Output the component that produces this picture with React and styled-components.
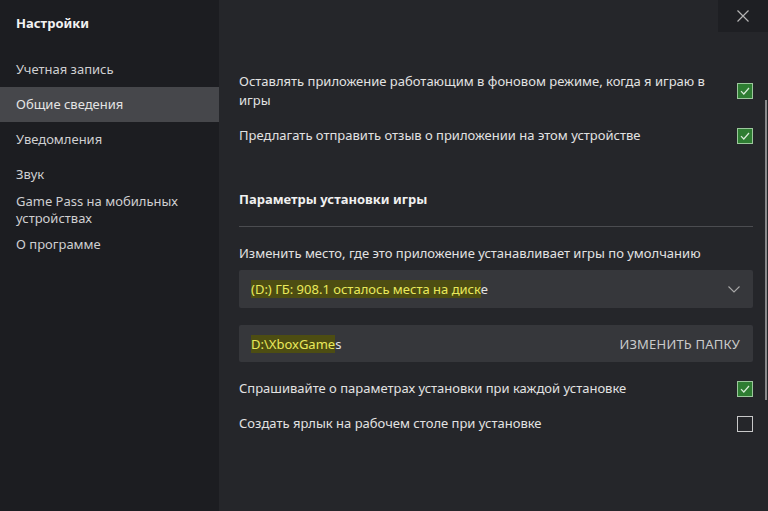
import React from "react"
import styled, { createGlobalStyle } from "styled-components"

const GlobalStyle = createGlobalStyle`
    html, body {
        margin:0;
        padding:0;
        background:#25262a;
    }
    * { box-sizing:border-box; }
`

const Window = styled.div`
    display:flex;
    width:768px;
    height:511px;
    overflow:hidden;
    position:relative;
    background:#25262a;
    font-family:"Noto Sans", "Open Sans", sans-serif;
`

const Sidebar = styled.nav`
    width:219px;
    flex-shrink:0;
    background:#1c1d21;
    display:flex;
    flex-direction:column;
    padding-top:15px;
`

const SidebarTitle = styled.div`
    padding:0 16px;
    font-size:13px;
    line-height:16px;
    font-weight:700;
    color:#f2f2f2;
    margin-bottom:21px;
`

const MenuItem = styled.div`
    min-height:35px;
    display:flex;
    align-items:center;
    padding:0 16px;
    font-size:13px;
    line-height:17px;
    color:${p => p.active ? "#e4e4e4" : "#cfcfd1"};
    background:${p => p.active ? "#46474b" : "transparent"};
`

const Main = styled.main`
    flex:1;
    display:flex;
    flex-direction:column;
    color:#e2e2e2;
    font-size:13px;
`

const TopBar = styled.div`
    height:32px;
    display:flex;
    justify-content:flex-end;
`

const CloseButton = styled.div`
    width:50px;
    height:32px;
    background:#1e1f23;
    display:flex;
    align-items:center;
    justify-content:center;
    color:#b4b4b4;
`

const Content = styled.div`
    display:flex;
    flex-direction:column;
    padding:40px 15px 0 20px;
`

const Row = styled.div`
    display:flex;
    align-items:center;
    justify-content:space-between;
    gap:20px;
    min-height:${p => p.tall ? "38px" : "19px"};
    margin-top:${p => p.mt || 0}px;
    line-height:19px;
`

const RowText = styled.div`
    flex:1;
    max-width:480px;
`

const Box = styled.div`
    width:16px;
    height:16px;
    flex-shrink:0;
    border:1px solid ${p => p.checked ? "#9cc79c" : "#c8c8c8"};
    background:${p => p.checked ? "#2e7d32" : "transparent"};
    display:flex;
    align-items:center;
    justify-content:center;
`

const SectionTitle = styled.div`
    margin-top:45px;
    font-weight:700;
    line-height:19px;
    color:#f0f0f0;
`

const Divider = styled.div`
    margin-top:17px;
    height:1px;
    background:#4b4c50;
`

const Label = styled.div`
    margin-top:17px;
    line-height:19px;
`

const Field = styled.div`
    margin-top:${p => p.mt}px;
    height:${p => p.h}px;
    background:#36373b;
    border-radius:2px;
    display:flex;
    align-items:center;
    justify-content:space-between;
    padding:0 13px 0 12px;
`

const Mark = styled.span`
    background:#4d4d12;
    color:#e9e95c;
`

const FieldAction = styled.span`
    color:#cacaca;
    letter-spacing:0.2px;
`

const Scrollbar = styled.div`
    position:absolute;
    right:1px;
    top:100px;
    width:2px;
    height:300px;
    background:#8a8a8c;
`

const Check = ({checked}) => (
    <Box checked={checked}>
        {checked && (
            <svg width="10" height="8" viewBox="0 0 10 8">
                <path d="M1 4.2 L3.8 7 L9 1" fill="none" stroke="#d9ecd9" strokeWidth="1.2"/>
            </svg>
        )}
    </Box>
)

const menu = ["Учетная запись", "Общие сведения", "Уведомления", "Звук", "Game Pass на мобильных устройствах", "О программе"]

const App = () => {
    return (
        <Window>
            <GlobalStyle/>
            <Sidebar>
                <SidebarTitle>Настройки</SidebarTitle>
                {menu.map((item, i) => <MenuItem key={i} active={i === 1}>{item === menu[4] ? <span>Game Pass на мобильных<br/>устройствах</span> : item}</MenuItem>)}
            </Sidebar>
            <Main>
                <TopBar>
                    <CloseButton>
                        <svg width="12" height="12" viewBox="0 0 12 12">
                            <path d="M0.5 0.5 L11.5 11.5 M11.5 0.5 L0.5 11.5" stroke="currentColor" strokeWidth="1.2"/>
                        </svg>
                    </CloseButton>
                </TopBar>
                <Content>
                    <Row tall>
                        <RowText>Оставлять приложение работающим в фоновом режиме, когда я играю в игры</RowText>
                        <Check checked/>
                    </Row>
                    <Row mt={16}>
                        <RowText>Предлагать отправить отзыв о приложении на этом устройстве</RowText>
                        <Check checked/>
                    </Row>
                    <SectionTitle>Параметры установки игры</SectionTitle>
                    <Divider/>
                    <Label>Изменить место, где это приложение устанавливает игры по умолчанию</Label>
                    <Field mt={7} h={38}>
                        <span><Mark>(D:) ГБ: 908.1 осталось места на диск</Mark>е</span>
                        <svg width="12" height="7" viewBox="0 0 12 7">
                            <path d="M0.5 0.5 L6 6 L11.5 0.5" fill="none" stroke="#a8a8a8" strokeWidth="1.1"/>
                        </svg>
                    </Field>
                    <Field mt={17} h={37}>
                        <span><Mark>D:\XboxGame</Mark>s</span>
                        <FieldAction>ИЗМЕНИТЬ ПАПКУ</FieldAction>
                    </Field>
                    <Row mt={17}>
                        <RowText>Спрашивайте о параметрах установки при каждой установке</RowText>
                        <Check checked/>
                    </Row>
                    <Row mt={16}>
                        <RowText>Создать ярлык на рабочем столе при установке</RowText>
                        <Check/>
                    </Row>
                </Content>
            </Main>
            <Scrollbar/>
        </Window>
    )
}

export default App
